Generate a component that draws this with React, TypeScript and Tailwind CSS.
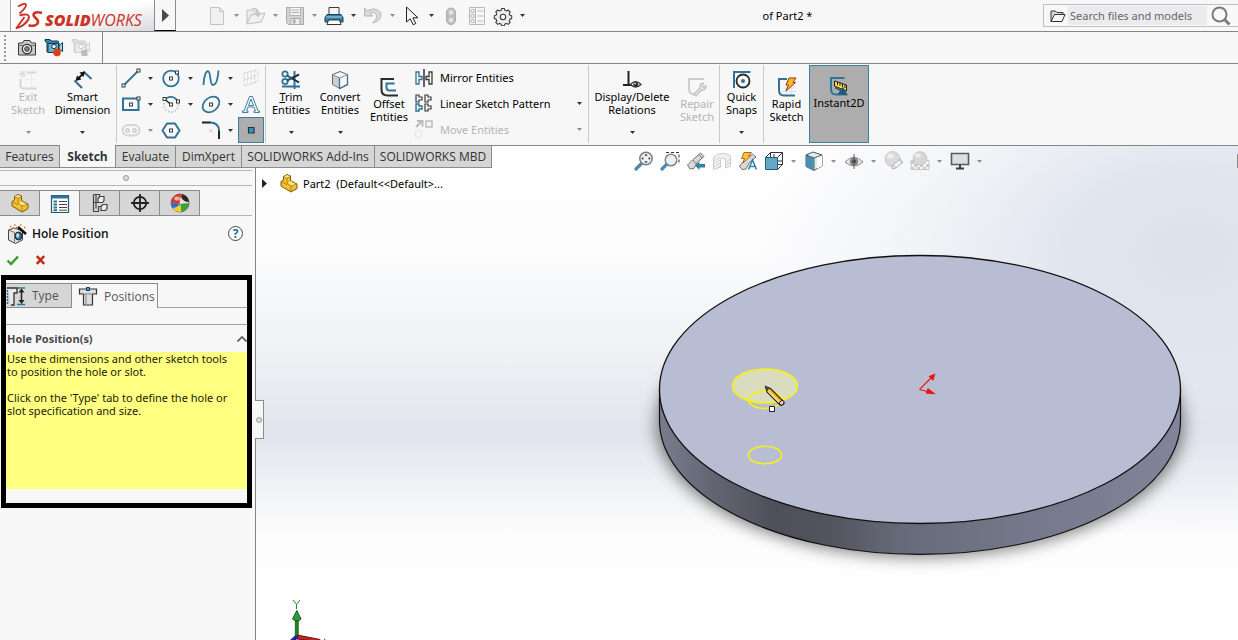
import type { ReactNode } from "react";

const INK = "#3a3a3a";
const BLUE = "#2f7396";

function Icon({ children }: { children: ReactNode }) {
  return (
    <svg viewBox="0 0 20 20" className="block h-5 w-5 shrink-0" fill="none" aria-hidden="true">
      {children}
    </svg>
  );
}

function Caret({ dim = false }: { dim?: boolean }) {
  return (
    <svg viewBox="0 0 5 3" className="block h-[3px] w-[5px] shrink-0" aria-hidden="true">
      <path d="M0 0h5L2.5 3z" fill={dim ? "#8e8e8e" : "#333"} />
    </svg>
  );
}

/* ---------- part glyphs shared by several places ---------- */

function Node({ x, y }: { x: number; y: number }) {
  return <rect x={x - 1.5} y={y - 1.5} width="3" height="3" fill="#fff" stroke={INK} />;
}

const PartIcon = (
  <Icon>
    <path d="M2 8.500 4.500 7V3.500L8 1.500 11.500 3v4.500L14 9l4 2v4.500L12 19 2 13z" fill="#f2c22e" stroke="#7a5710" strokeWidth="1" strokeLinejoin="round" />
    <path d="M4.500 3.500 8 5.200v5L12 13v5.500M8 5.200 11.500 3.200M12 13l5.800-2.200M2 8.600l2.500 1.200 3.500 2" stroke="#a87a16" strokeWidth=".9" />
    <path d="m5 3.500 3-1.500 3 1.300L8 4.800zM9 10l2.500-1.800 5 2.700-4.500 1.700z" fill="#fbe58c" />
  </Icon>
);

/* ---------- title bar ---------- */

const NewIcon = (
  <Icon>
    <path d="M3.500 1.500h9l4 4v13h-13z" fill="#f1f1f1" stroke="#c3c3c3" />
    <path d="M12.500 1.500v4h4" stroke="#c3c3c3" />
  </Icon>
);
const OpenIcon = (
  <Icon>
    <path d="M1 18V4h5l2 2h5v3" fill="#ececec" stroke="#c0c0c0" />
    <path d="m1 18 4-9 14-2-4 9z" fill="#f1f1f1" stroke="#bdbdbd" />
    <path d="M6 2c5-.5 7 1.500 7 5h2.500L12 11.500 8.500 7H11c0-2-1.500-3.500-5-3.500z" fill="#c4c4c4" />
  </Icon>
);
const SaveIcon = (
  <Icon>
    <path d="M1.500 1.500h17v17h-15l-2-2z" fill="#d2d2d2" stroke="#aaa" />
    <path d="M5 1.500h10.500v8H5z" fill="#f3f3f3" stroke="#b3b3b3" />
    <path d="M6.500 4h7.500M6.500 6.500h7.500" stroke="#b0b0b0" />
    <path d="M6 12.500h9v6H6z" fill="#eee" stroke="#a9a9a9" />
    <path d="M8 13.500h2.500v4H8z" fill="#a8a8a8" />
  </Icon>
);
const PrintIcon = (
  <Icon>
    <path d="M5 9V1.500h10V9" fill="#f4f4f4" stroke="#3c3c3c" />
    <path d="M3 8.500h14l2 3v4.500H1v-4.500z" fill="#2e7ea6" stroke="#17445c" />
    <path d="M2 11h16" stroke="#83bdd6" strokeWidth="1.500" />
    <path d="M4.500 14h11l1.500 4.500H3z" fill="#fff" stroke="#333" />
  </Icon>
);
const UndoIcon = (
  <Icon>
    <path d="M1.500 2v8H10L7 7.200c3-1.600 6-.5 6.500 2.800.3 3-1.500 5-4 7 5-1 8.500-4 8.500-8C18 3.500 10 1 4.500 5z" fill="#dadada" stroke="#b9b9b9" strokeLinejoin="round" />
  </Icon>
);
const PointerIcon = (
  <Icon>
    <path d="M4.500 1v15l3.700-3.200 3 6 2.600-1.300-2.900-5.700H16z" fill="#f5f5f5" stroke="#222" strokeLinejoin="round" />
  </Icon>
);
const LightIcon = (
  <Icon>
    <rect x="5.500" y="2" width="9" height="16.500" rx="4.500" fill="#bfbfbf" stroke="#aaa" />
    <circle cx="10" cy="6.500" r="2.300" fill="#e3e3e3" />
    <circle cx="10" cy="14" r="2.300" fill="#e3e3e3" />
  </Icon>
);
const OptionsListIcon = (
  <Icon>
    <path d="M2.500 1.500h15v17h-15zM8.500 1.500v17M10.500 5h6M10.500 10h6M10.500 15h6" stroke="#b9b9b9" />
    <path d="M4 3.500h3v3H4zM4 8.500h3v3H4zM4 13.500h3v3H4z" stroke="#b9b9b9" />
  </Icon>
);
const GearIcon = (
  <Icon>
    <path
      d="M8.600 2.500h2.800l.5 1.800 1.600.7 1.700-1 2 2-1 1.700.7 1.600 1.800.5v2.800l-1.800.5-.7 1.600 1 1.700-2 2-1.700-1-1.600.7-.5 1.700H8.600l-.5-1.700-1.600-.7-1.700 1-2-2 1-1.700-.7-1.600-1.800-.5V9.800l1.800-.5.7-1.600-1-1.700 2-2 1.700 1 1.600-.7z"
      fill="#ececec"
      stroke="#3d3d3d"
      strokeWidth="1.100"
      strokeLinejoin="round"
    />
    <circle cx="10" cy="11" r="2.700" fill="#fafafa" stroke="#3d3d3d" strokeWidth="1.100" />
  </Icon>
);

/* ---------- capture row ---------- */

const CameraIcon = (
  <Icon>
    <path d="M1.500 5h4L7 2.500h6L14.500 5h4v12h-17z" fill="#c9c9c9" stroke="#3a3a3a" strokeLinejoin="round" />
    <path d="M2 7.500h16" stroke="#777" />
    <circle cx="10" cy="11" r="4.700" fill="#ededed" stroke="#333" strokeWidth="1.200" />
    <circle cx="10" cy="11" r="2.300" fill="#888" stroke="#333" />
  </Icon>
);
const RecordIcon = (
  <Icon>
    <path d="M1 1.500h5l1 1.500h7l1 2v9H3V5L1 3z" fill="#2f87ae" stroke="#16394b" />
    <path d="M4 5.500h10.500v9H4z" fill="#62b2d2" stroke="#16394b" />
    <circle cx="10" cy="8.500" r="2.200" fill="#fff" stroke="#16394b" />
    <path d="m15 8 3.500-3.500v9L15 11z" fill="#a6d3e4" stroke="#16394b" />
    <circle cx="13" cy="14.500" r="3.800" fill="#e23d0c" />
  </Icon>
);
const StopRecordIcon = (
  <Icon>
    <path d="M1 1.500h5l1 1.500h7l1 2v9H3V5L1 3z" fill="#e0e0e0" stroke="#cfcfcf" />
    <path d="M4 5.500h10.500v9H4z" fill="#ececec" stroke="#cfcfcf" />
    <circle cx="10" cy="8.500" r="2.200" fill="#fff" stroke="#c9c9c9" />
    <path d="m15 8 3.500-3.500v9L15 11z" fill="#f1f1f1" stroke="#cfcfcf" />
    <path d="M10.500 12h6v6h-6z" fill="#bdbdbd" />
  </Icon>
);

/* ---------- ribbon ---------- */

const ExitSketchIcon = (
  <Icon>
    <path d="M9 2.500h9.500M2.500 9v6q0 3.500 3.500 3.500h12.500" stroke="#d6d6d6" strokeWidth="2" />
    <path d="M4.500 0v8M.5 4h8M1.500 1l6 6M7.500 1l-6 6" stroke="#d0d0d0" strokeWidth=".8" />
    <path d="M13.500 4v13M8 9.500h10" stroke="#ececec" />
  </Icon>
);
const SmartDimIcon = (
  <Icon>
    <path d="m1.500 10.500 7.500 7.500M10.500 1.500l8 7.500" stroke={BLUE} strokeWidth="2" />
    <path d="m4 9.500 7-6.500" stroke="#111" strokeWidth="1.800" />
    <path d="M2.500 11 4 5.500 8.500 9.500zM12 1.500 10.500 7 6.500 2.500z" fill="#111" />
  </Icon>
);
const TrimIcon = (
  <Icon>
    <path d="M13.500 1v18M1 16.500h18" stroke={BLUE} strokeWidth="2" />
    <circle cx="4" cy="4" r="2.700" stroke={BLUE} strokeWidth="1.800" />
    <circle cx="4" cy="11.500" r="2.700" stroke={BLUE} strokeWidth="1.800" />
    <path d="m6 5.500 12 7M6 10.500l12-6" stroke="#24546d" strokeWidth="2" />
    <path d="m11 8.500 7 4M11 8l7-3.500" stroke="#222" strokeWidth="1.200" />
  </Icon>
);
const ConvertIcon = (
  <Icon>
    <path d="m10 1.500 7.500 3v10L10 18.500l-7.500-4v-10z" fill="#f7f7f7" stroke="#666" strokeLinejoin="round" />
    <path d="m3 5 6.500 3v9.500L3 14z" fill="#cdcdcd" />
    <path d="M2.500 4.500 9.500 8l8-3.500" stroke="#888" />
    <path d="M9.500 8v10.500l8-4v-10" stroke={BLUE} strokeWidth="1.300" />
  </Icon>
);
const OffsetIcon = (
  <Icon>
    <path d="M15 2H2.500v10.500q0 6 6 6H19" stroke="#2b2b2b" strokeWidth="2" />
    <path d="M15.500 6.500H7.500v4q0 3 3 3H17" stroke={BLUE} strokeWidth="2" />
  </Icon>
);
const MirrorIcon = (
  <Icon>
    <path d="M10 1v18" stroke="#222" strokeWidth="1.400" />
    <path d="M2 4h3v4.500h3v3H5V16H2z" stroke={BLUE} strokeWidth="1.300" />
    <path d="M18 4h-3v4.500h-3v3h3V16h3z" stroke={INK} strokeWidth="1.300" />
  </Icon>
);
const PatternIcon = (
  <Icon>
    <path d="M2 2h3v2h3v3H5v2H2zM11 2h3v2h3v3h-3v2h-3zM11 11h3v2h3v3h-3v2h-3z" stroke={INK} strokeWidth="1.200" />
    <path d="M2 11h3v2h3v3H5v2H2z" stroke={BLUE} strokeWidth="1.400" />
  </Icon>
);
const MoveIcon = (
  <Icon>
    <path d="m2 8 5-5M3 2h5.500v5.500" stroke="#b9b9b9" strokeWidth="2" />
    <path d="M12 2h6v6h-6z" stroke="#bdbdbd" strokeWidth="1.500" />
    <path d="M1.500 12h6v6h-6z" stroke="#dadada" strokeDasharray="2 1" />
  </Icon>
);
const RelationsIcon = (
  <Icon>
    <path d="M6.500 1v14M1 15h9" stroke="#222" strokeWidth="2" />
    <path d="M8.500 14.500q5-6 10.500 0-5.500 5-10.500 0z" fill="#fff" stroke="#333" strokeWidth="1.200" />
    <circle cx="13.800" cy="14.300" r="2.500" fill="#333" />
    <circle cx="13" cy="13.500" r=".8" fill="#fff" />
  </Icon>
);
const RepairIcon = (
  <Icon>
    <path d="M17 2H2v9.500q0 6 6 6" stroke="#cdcdcd" strokeWidth="2" />
    <path d="m7 17 6-6c-1-3 1-5 3.500-5l-1.500 3 2 1.500 2-2c.5 3-2 5-4.500 4.500l-5.500 6z" fill="#e8e8e8" stroke="#bfbfbf" strokeWidth="1.200" />
  </Icon>
);
const SnapsIcon = (
  <Icon>
    <path d="M2 18V2H18.500" stroke={BLUE} strokeWidth="2" />
    <circle cx="11" cy="11" r="6.500" stroke="#2a2a2a" strokeWidth="1.800" />
    <circle cx="11" cy="11" r="2" fill={BLUE} />
  </Icon>
);
const RapidIcon = (
  <Icon>
    <path d="M14 6v13M9 11h10M9 6v13M5 14.500h14" stroke="#dedede" />
    <path d="M10 2H2v11q0 5.500 5 5.500h11" stroke={BLUE} strokeWidth="2" />
    <path d="M12 1h7l-3 4.500h2.500L9 14l2.500-6H9z" fill="#ffb52e" stroke="#8f3f0e" strokeLinejoin="round" />
  </Icon>
);
const Instant2DIcon = (
  <Icon>
    <path d="M15.500 2H2v11q0 5.500 5 5.500h11.500" stroke={BLUE} strokeWidth="2" />
    <path d="M5.500 5 17.500 9v6L5.500 10z" fill="#f7dc43" stroke="#222" />
    <path d="M8.500 6v3M11 7v3M13.500 8v3M16 9v3" stroke="#222" />
    <path d="m6 11.500 8 4M10 17.500l7 .5-3-6z" fill="#1e5a7a" stroke="#1e5a7a" strokeWidth="1.400" />
  </Icon>
);

const LineIcon = (
  <Icon>
    <path d="M2.500 17.500 17.500 2.500" stroke={BLUE} strokeWidth="1.800" />
    <Node x={2.500} y={17.500} />
    <Node x={17.500} y={2.500} />
  </Icon>
);
const CircleIcon = (
  <Icon>
    <circle cx="10" cy="10.500" r="7.800" stroke={BLUE} strokeWidth="1.800" />
    <Node x={10} y={10.500} />
    <Node x={16} y={4.500} />
  </Icon>
);
const SplineIcon = (
  <Icon>
    <path d="M2.500 17C3 8 5 2 7.500 3.500S8.500 17 12 17s5-8 5.500-14.500" stroke={BLUE} strokeWidth="1.800" />
  </Icon>
);
const PlaneIcon = (
  <Icon>
    <path d="m3 5 14-3.500v12L3 18.500zM3 11.500l14-4M10 3v13M6.500 4v13M13.500 2.500v13" stroke="#cfcfcf" strokeDasharray="2 1.500" />
  </Icon>
);
const RectIcon = (
  <Icon>
    <path d="M2 4.500h15.500v11.500H2z" stroke={BLUE} strokeWidth="2" />
    <Node x={10} y={10.500} />
    <Node x={17.500} y={4.500} />
  </Icon>
);
const ArcIcon = (
  <Icon>
    <path d="M3.500 6.500c3.500-5 10-5 13.500 1" stroke={BLUE} strokeWidth="1.800" />
    <path d="M3 9c-1 12 15 12 14.500 0" stroke="#c2c2c2" strokeWidth="1.800" strokeDasharray="1.500 1.800" />
    <path d="m4 5.500 6 5" stroke="#222" strokeWidth="1.500" />
    <Node x={3.500} y={5} />
    <Node x={10} y={10.500} />
    <Node x={17} y={7.500} />
  </Icon>
);
const EllipseIcon = (
  <Icon>
    <ellipse cx="10" cy="10.500" rx="9.200" ry="6.800" transform="rotate(-38 10 10.500)" stroke={BLUE} strokeWidth="1.800" />
    <Node x={10} y={10.500} />
  </Icon>
);
const TextIcon = (
  <Icon>
    <path d="M1.500 18.500h5.500v-1.500H5.500L7 13h6l1.500 4H13v1.500h5.500V17H17L11.500 2.500h-3L3 17H1.500zM7.500 11.500h5L10 5z" fill="#f4f9fb" stroke={BLUE} strokeWidth=".9" />
  </Icon>
);
const SlotIcon = (
  <Icon>
    <rect x="1.500" y="5" width="17" height="10.500" rx="5.200" stroke="#d4d4d4" strokeWidth="1.800" />
    <path d="M5 9h3v3H5zM12 9h3v3h-3z" stroke="#bdbdbd" />
  </Icon>
);
const PolygonIcon = (
  <Icon>
    <path d="m6 3.500-4.500 7L6 17.500h8l4.500-7L14 3.500z" stroke={BLUE} strokeWidth="2" strokeLinejoin="round" />
    <Node x={10} y={10.500} />
  </Icon>
);
const FilletIcon = (
  <Icon>
    <path d="M1 2.500h9M18 10v9" stroke="#222" strokeWidth="2" />
    <path d="M9 2.500q9 0 9 8.500" stroke={BLUE} strokeWidth="2" />
    <path d="m8 9 3.500 3.500M11.500 9 8 12.500" stroke="#d4bfbf" />
  </Icon>
);
const PointIcon = (
  <Icon>
    <path d="M7.500 7.500h5.500v5.500H7.500z" fill="#3e93b5" stroke="#17384a" strokeWidth="1.200" />
  </Icon>
);

/* ---------- heads-up toolbar ---------- */

const ZoomFitIcon = (
  <Icon>
    <path d="m2 18 6-6" stroke="#4b8aa8" strokeWidth="3.200" strokeLinecap="round" />
    <circle cx="12" cy="7.500" r="6.200" fill="#eef0f2" stroke="#7d8186" strokeWidth="1.500" />
    <path d="m12 2.800 1.600 2h-3.200zM12 12.200l1.600-2h-3.200zM7.300 7.500l2-1.600v3.200zM16.700 7.500l-2-1.600v3.200z" fill="#333" />
  </Icon>
);
const ZoomAreaIcon = (
  <Icon>
    <path d="M6 1.500h13V13" stroke="#333" strokeDasharray="3 2" />
    <path d="m2 18 5-5" stroke="#4b8aa8" strokeWidth="3.200" strokeLinecap="round" />
    <circle cx="11" cy="9" r="5.800" fill="#e4f1f6" stroke="#84888c" strokeWidth="1.500" />
  </Icon>
);
const PrevViewIcon = (
  <Icon>
    <path d="m1.500 14 5-5 8-7 3.500 3.500-7 6-3 6-4 .5z" fill="#d8d8d8" stroke="#757575" />
    <path d="m7 9 3.500 4M13 3.500l3 3.500" stroke="#777" />
    <path d="m9 14.500 4.500-4v2.500H19v3.500h-5.500V19z" fill="#347fa3" />
  </Icon>
);
const SectionIcon = (
  <Icon>
    <path d="M1.500 6.500 6 3q7-2 12.500 1.500V15l-5 2V8q-3-2-5 0v8l-7 2.500z" fill="#f1f1f1" stroke="#cdcdcd" />
    <path d="m2 10 6-4M2 13l6-4M2 16l6-4M4 18l4-3M13.500 11l5-3M13.500 14l5-3" stroke="#d4d4d4" />
  </Icon>
);
const AnnotationIcon = (
  <Icon>
    <path d="m1.500 15 5-6 8-6 3.500 3-7 6-3 6-4 .5z" fill="#d8d8d8" stroke="#757575" />
    <path d="M6 1.500h7.500l-3 3.500h2L5 12l1.500-4.500H3.500z" fill="#ffc338" stroke="#b5651c" />
    <path d="M10.500 18.500 14.500 9l4 9.500M12 15.500h5" stroke="#347fa3" strokeWidth="1.500" />
  </Icon>
);
const OrientationIcon = (
  <Icon>
    <path d="m1.500 6.500 5-5h12v12l-5 5" stroke="#333" />
    <path d="M6.500 1.500v5M13.500 6.500l5-5M13.500 13.500h5M10 3v4M14 10h4" stroke="#333" />
    <path d="M1.500 6.500h12v12h-12z" fill="#60a8c6" stroke="#275f7a" />
  </Icon>
);
const DisplayStyleIcon = (
  <Icon>
    <path d="m9 1 9 3v11l-8 4.500-8-4V4z" fill="#d8edf5" stroke="#4c5960" strokeLinejoin="round" />
    <path d="m2 4 7.500 3v12L2 15.500z" fill="#4591b3" />
    <path d="m13 5.500 5-1.500v11l-5 2.800z" fill="#fff" />
    <path d="M2 4l8 3 8-3M10 7v12" stroke="#4c5960" />
  </Icon>
);
const HideShowIcon = (
  <Icon>
    <path d="M1 11q9-9.500 18 0-9 8-18 0z" fill="#e8e8e8" stroke="#8a8a8a" />
    <circle cx="10" cy="10.500" r="4.300" fill="#888" />
    <circle cx="10" cy="10.500" r="2" fill="#444" />
    <path d="M10 3v15" stroke="#5a5a5a" />
  </Icon>
);
const AppearanceIcon = (
  <Icon>
    <circle cx="8.500" cy="8" r="7.500" fill="#dadada" stroke="#c8c8c8" />
    <ellipse cx="6.500" cy="5" rx="3.500" ry="2.500" fill="#ededed" />
    <path d="m8 18 1-4 7-6 3 3-7 6z" fill="#f2f2f2" stroke="#b5b5b5" />
    <path d="m9 14 3 3M15 9l3 3" stroke="#b5b5b5" />
  </Icon>
);
const SceneIcon = (
  <Icon>
    <path d="M1 9.500h18v9H1z" fill="#f6f6f6" stroke="#c6c6c6" />
    <path d="M1 10h3v3H1zM4 13h3v3H4zM7 16h3v3H7zM10 13h3v3h-3zM13 16h3v3h-3zM16 13h3v3h-3zM1 16h3v3H1z" fill="#c9c9c9" />
    <circle cx="10" cy="7.500" r="6.800" fill="#d6d6d6" stroke="#c2c2c2" />
    <ellipse cx="8" cy="4.500" rx="3" ry="2" fill="#ececec" />
  </Icon>
);
const MonitorIcon = (
  <Icon>
    <path d="M1.500 2.500h17v11h-17z" fill="#dcdfe1" stroke="#5a5a5a" strokeWidth="1.600" />
    <path d="M10 14v3M6 17.500h8" stroke="#3d3d3d" strokeWidth="2" />
  </Icon>
);

/* ---------- property panel ---------- */

const PropertyIcon = (
  <Icon>
    <path d="M1.500 1.500h17v17h-17z" fill="#fff" stroke="#24576f" strokeWidth="1.200" />
    <path d="M1.500 3h17" stroke={BLUE} strokeWidth="3" />
    <path d="M3.500 7.500H7M3.500 10.500H7M3.500 13.500H7M3.500 16.200H7" stroke={BLUE} strokeWidth="2" />
    <path d="M9 7.500h8M9 10.500h8M9 13.500h8M9 16.200h8" stroke="#444" />
  </Icon>
);
const ConfigIcon = (
  <Icon>
    <path d="M3.500 1.500h6v4M3.500 1.500v17h5v-5h4M6 1.500v14M3.500 9.500h6" stroke="#444" strokeWidth="1.200" />
    <path d="M8 5.500 10 3.500h4v4l-1.500 2H8zM11 13.500l2-2h4v4l-1.500 2H11z" fill="#eee" stroke="#444" strokeWidth="1.200" />
  </Icon>
);
const DimXpertIcon = (
  <Icon>
    <circle cx="10" cy="10" r="6.200" stroke="#222" strokeWidth="1.800" />
    <path d="M10 1v18M1 10h18" stroke="#222" strokeWidth="1.800" />
  </Icon>
);
const DisplayManagerIcon = (
  <Icon>
    <circle cx="10" cy="10" r="9" fill="#e9e4d8" stroke="#666" />
    <path d="M10 11Q5 9 1.200 10A9 9 0 0 1 12 1.300Q9 5 10 11z" fill="#d8352a" />
    <path d="M12 1.300A9 9 0 0 1 19 9q-6 0-8-5z" fill="#2c2725" />
    <path d="M10 11q5-1 9-.5A9 9 0 0 1 11 19q0-4-1-8z" fill="#3ca03c" />
    <path d="M10 11q1 4 1 8a9 9 0 0 1-8-3q4-1 7-5z" fill="#f6cd20" />
    <path d="M10 11q-3 4-7.500 4A9 9 0 0 1 1.200 10q4-1 8.800 1z" fill="#2e6ec4" />
    <ellipse cx="7" cy="5.500" rx="2.800" ry="2" fill="#fff" opacity=".6" />
  </Icon>
);
const HoleWizardIcon = (
  <Icon>
    <path d="m1.500 6 6-2 8 3v9l-7 3.500-7-3.500z" fill="#e2e2e2" stroke="#444" />
    <path d="m1.500 6 6 2.500v10" stroke="#777" />
    <ellipse cx="11.500" cy="12" rx="3.400" ry="4" fill="#2f6f92" stroke="#222" />
    <ellipse cx="10.700" cy="11.500" rx="1.600" ry="2.200" fill="#b5dcec" />
    <path d="m11 3 8 7" stroke="#111" strokeWidth="2.400" />
    <path d="M3 2.500h1.500M7 1h1.500M13 1h1.500M9 3.500h1.500M17 3.500h1.500M5.500 4H7" stroke="#d9731e" strokeWidth="1.500" />
  </Icon>
);
const TypeIcon = (
  <Icon>
    <path d="M1.500 1v18" stroke={BLUE} strokeWidth="1.500" strokeDasharray="2 1" />
    <path d="M2 2h9v5H8v12H5" fill="#e9e9e9" stroke="#333" strokeWidth="1.300" />
    <path d="M11 2h8M11 18.500h8" stroke={BLUE} strokeWidth="1.500" />
    <path d="M15.500 4v12" stroke="#222" strokeWidth="1.500" />
    <path d="m15.500 2.500 3 4h-6zM15.500 18l3-4h-6z" fill="#222" />
  </Icon>
);
const PositionsIcon = (
  <Icon>
    <path d="M1.500 3h17v5h-4v11h-9V8h-4z" fill="#ddd" stroke="#333" strokeWidth="1.200" />
    <path d="M8 8v10.500M5.500 8h9" stroke="#888" />
    <path d="M8.500 1.500h3v3h-3z" fill="#4aa0c4" stroke="#17384a" />
  </Icon>
);

/* ---------- building blocks ---------- */

function TitleTool({ icon, label, caret, dim }: { icon: ReactNode; label: string; caret?: boolean; dim?: boolean }) {
  return (
    <button type="button" aria-label={label} className="flex items-center">
      {icon}
      {caret && (
        <span className="flex w-[19px] justify-center">
          <Caret dim={dim} />
        </span>
      )}
    </button>
  );
}

type RibbonProps = {
  icon: ReactNode;
  lines: ReactNode[];
  width: string;
  caret?: boolean;
  disabled?: boolean;
  active?: boolean;
};

function RibbonButton({ icon, lines, width, caret, disabled, active }: RibbonProps) {
  return (
    <button
      type="button"
      disabled={disabled}
      className={`flex shrink-0 flex-col items-center self-stretch whitespace-nowrap leading-[13px] ${width} ${
        caret ? "pt-[5px]" : active ? "pt-2.5" : "pt-3"
      } ${disabled ? "text-[#b4b4b4]" : "text-black"} ${active ? "border border-[#3f7c9b] bg-[#adadad]" : ""}`}
    >
      {icon}
      {lines.map((line, index) => (
        <span key={index}>{line}</span>
      ))}
      {caret && (
        <span className="mt-auto pb-[9px]">
          <Caret dim={disabled} />
        </span>
      )}
    </button>
  );
}

function Separator() {
  return <div className="w-px shrink-0 self-stretch bg-[#c9c9c9]" />;
}

type ToolCell = { icon: ReactNode; label: string; caret?: boolean; dim?: boolean; active?: boolean };

const sketchTools: ToolCell[] = [
  { icon: LineIcon, label: "Line", caret: true },
  { icon: CircleIcon, label: "Circle", caret: true },
  { icon: SplineIcon, label: "Spline", caret: true },
  { icon: PlaneIcon, label: "Plane" },
  { icon: RectIcon, label: "Rectangle", caret: true },
  { icon: ArcIcon, label: "Arc", caret: true },
  { icon: EllipseIcon, label: "Ellipse", caret: true },
  { icon: TextIcon, label: "Text" },
  { icon: SlotIcon, label: "Slot", caret: true, dim: true },
  { icon: PolygonIcon, label: "Polygon" },
  { icon: FilletIcon, label: "Fillet", caret: true },
  { icon: PointIcon, label: "Point", active: true },
];

const ribbonTabs = [
  { label: "Features", width: "w-[60px]" },
  { label: "Sketch", width: "w-[56px]" },
  { label: "Evaluate", width: "w-[60px]" },
  { label: "DimXpert", width: "w-[66px]" },
  { label: "SOLIDWORKS Add-Ins", width: "w-[133px]" },
  { label: "SOLIDWORKS MBD", width: "w-[117px]" },
];

const hudTools: ToolCell[] = [
  { icon: ZoomFitIcon, label: "Zoom to fit" },
  { icon: ZoomAreaIcon, label: "Zoom to area" },
  { icon: PrevViewIcon, label: "Previous view" },
  { icon: SectionIcon, label: "Section view" },
  { icon: AnnotationIcon, label: "Dynamic annotation views" },
  { icon: OrientationIcon, label: "View orientation", caret: true },
  { icon: DisplayStyleIcon, label: "Display style", caret: true },
  { icon: HideShowIcon, label: "Hide or show items", caret: true },
  { icon: AppearanceIcon, label: "Edit appearance" },
  { icon: SceneIcon, label: "Apply scene", caret: true },
  { icon: MonitorIcon, label: "View settings", caret: true },
];

const panelTabs = [
  { icon: PartIcon, label: "Feature tree" },
  { icon: PropertyIcon, label: "Properties" },
  { icon: ConfigIcon, label: "Configurations" },
  { icon: DimXpertIcon, label: "DimXpert manager" },
  { icon: DisplayManagerIcon, label: "Display manager" },
];

function Logo() {
  return (
    <div className="flex h-full w-36 items-center border-l border-[#a8a8a8] bg-linear-to-br from-white from-50% to-[#d9dade] pl-1">
      <svg viewBox="0 0 28 28" className="h-7 w-7 shrink-0" fill="none" strokeLinejoin="round" aria-hidden="true">
        <path d="M3 4.500C6 2.500 10.500.5 11 2.800c.3 2.200-3.500 6-6.500 8.700" stroke="#cf3327" strokeWidth="1.800" />
        <path d="M4.500 13.500C10 11.500 15.500 12 13.500 17 11.500 21.500 6 25 1.500 26L9.500 15" stroke="#cf3327" strokeWidth="2" />
        <path d="M27 11c-5-1.500-8.500-.5-8.500 2s5.500 4 4.500 7.500c-1 3-5 4-9.500 2.800" stroke="#cf3327" strokeWidth="2.600" />
      </svg>
      <span className="pt-2 pl-0.5 font-['Open_Sans',sans-serif] text-[16px] leading-5 text-[#cb3328] italic">
        <b className="font-extrabold">SOLID</b>WORKS
      </span>
    </div>
  );
}

function TitleBar() {
  return (
    <header className="flex h-8 shrink-0 items-center border-b border-[#858585] bg-[#f7f7f7]">
      <div className="flex h-full pl-2.5">
        <Logo />
        <button type="button" aria-label="Expand menu" className="flex w-[22px] items-center justify-center border-x border-b border-x-[#8b8b8b] border-b-black bg-[#f7f7f7]">
          <svg viewBox="0 0 7 13" className="h-[13px] w-[7px]" aria-hidden="true">
            <path d="M0 0v13l7-6.500z" fill="#4a4a4a" />
          </svg>
        </button>
      </div>
      <div className="flex items-center pl-[31px]">
        <TitleTool icon={NewIcon} label="New" caret dim />
        <TitleTool icon={OpenIcon} label="Open" caret dim />
        <TitleTool icon={SaveIcon} label="Save" caret dim />
        <TitleTool icon={PrintIcon} label="Print" caret />
        <TitleTool icon={UndoIcon} label="Undo" caret dim />
        <TitleTool icon={PointerIcon} label="Select" caret />
        <div className="flex items-center gap-[6px]">
          <TitleTool icon={LightIcon} label="Rebuild" />
          <TitleTool icon={OptionsListIcon} label="File properties" />
          <TitleTool icon={GearIcon} label="Options" caret />
        </div>
      </div>
      <h1 className="flex-1 text-center">of Part2 *</h1>
      <form className="flex h-[23px] w-[195px] items-center border border-r-0 border-[#bfbfbf] bg-[#f8f8f8] pl-1.5">
        <svg viewBox="0 0 16 14" className="h-3.5 w-4 shrink-0" fill="none" aria-hidden="true">
          <path d="M1 12.500V2h4.500L7 3.500h6V6" fill="#d8d8d8" stroke="#333" />
          <path d="m1 12.500 3.500-7H15l-3 7z" fill="#f5f5f5" stroke="#333" />
        </svg>
        <input
          type="text"
          aria-label="Search files and models"
          placeholder="Search files and models"
          className="ml-0.5 h-[19px] w-[139px] shrink-0 bg-[#ebebef] pl-[2px] text-[#666] outline-none placeholder:text-[#666]"
        />
        <button type="button" aria-label="Search" className="ml-1 flex shrink-0 items-center gap-[5px]">
          <svg viewBox="0 0 20 20" className="h-5 w-5" fill="none" aria-hidden="true">
            <circle cx="8.500" cy="8.500" r="7" stroke="#7b7b7b" strokeWidth="2" />
            <path d="m13.500 13.500 5 5" stroke="#7b7b7b" strokeWidth="3" />
          </svg>
        </button>
      </form>
    </header>
  );
}

function CaptureBar() {
  return (
    <div className="flex h-8 shrink-0 items-center border-b border-[#858585] bg-[#f7f7f7]">
      <div className="flex h-full w-[103px] items-center gap-[7px] border-r border-[#858585] pl-1">
        <div className="h-[26px] border-l-2 border-dotted border-[#999]" />
        <div className="flex gap-[7px] pl-1">
          <button type="button" aria-label="Capture image">{CameraIcon}</button>
          <button type="button" aria-label="Record video">{RecordIcon}</button>
          <button type="button" aria-label="Stop recording" disabled>{StopRecordIcon}</button>
        </div>
      </div>
    </div>
  );
}

function Ribbon() {
  return (
    <div className="flex h-[82px] shrink-0 items-stretch border-b border-[#858585] bg-[#f7f7f7] pt-px pb-0.5">
      <RibbonButton icon={ExitSketchIcon} lines={["Exit", "Sketch"]} width="w-14" caret disabled />
      <RibbonButton icon={SmartDimIcon} lines={["Smart", "Dimension"]} width="w-[53px]" caret />
      <div className="w-[7px]" />
      <Separator />
      <div className="grid grid-cols-[40px_40px_40px_27px] pl-px">
        {sketchTools.map((tool) => (
          <button key={tool.label} type="button" aria-label={tool.label} className="flex items-center">
            <span className={`flex h-[26px] w-[26px] items-center justify-center ${tool.active ? "border border-[#3f7c9b] bg-[#adadad]" : ""}`}>
              {tool.icon}
            </span>
            {tool.caret && (
              <span className="pl-1">
                <Caret dim={tool.dim} />
              </span>
            )}
          </button>
        ))}
      </div>
      <Separator />
      <RibbonButton icon={TrimIcon} lines={[<><u>T</u>rim</>, "Entities"]} width="w-[50px]" caret />
      <RibbonButton icon={ConvertIcon} lines={["Convert", "Entities"]} width="w-12" caret />
      <RibbonButton icon={OffsetIcon} lines={["Offset", "Entities"]} width="w-[50px]" />
      <div className="flex w-[174px] flex-col pr-1.5">
        <button type="button" className="flex h-[25px] items-center gap-1.5">
          {MirrorIcon}
          <span>Mirror Entities</span>
        </button>
        <button type="button" className="flex h-[26px] items-center gap-1.5">
          {PatternIcon}
          <span>Linear Sketch Pattern</span>
          <span className="ml-auto"><Caret /></span>
        </button>
        <button type="button" disabled className="flex h-[26px] items-center gap-1.5 text-[#b4b4b4]">
          {MoveIcon}
          <span>Move Entities</span>
          <span className="ml-auto"><Caret dim /></span>
        </button>
      </div>
      <Separator />
      <RibbonButton icon={RelationsIcon} lines={["Display/Delete", "Relations"]} width="w-[86px]" caret />
      <RibbonButton icon={RepairIcon} lines={["Repair", "Sketch"]} width="w-11" disabled />
      <Separator />
      <RibbonButton icon={SnapsIcon} lines={["Quick", "Snaps"]} width="w-[43px]" caret />
      <Separator />
      <RibbonButton icon={RapidIcon} lines={["Rapid", "Sketch"]} width="w-[45px]" />
      <RibbonButton icon={Instant2DIcon} lines={["Instant2D"]} width="w-[60px]" active />
    </div>
  );
}

function Scene() {
  return (
    <svg
      viewBox="0 146 1238 494"
      preserveAspectRatio="xMinYMin slice"
      className="absolute inset-0 h-full w-full"
      role="img"
      aria-label="Disc model with hole preview"
    >
      <defs>
        <linearGradient id="band" x1="0" y1="146" x2="0" y2="640" gradientUnits="userSpaceOnUse">
          <stop offset="0" stopColor="#fff" />
          <stop offset=".22" stopColor="#fcfcfd" />
          <stop offset=".42" stopColor="#eff1f5" />
          <stop offset=".58" stopColor="#e1e4ec" />
          <stop offset=".7" stopColor="#f2f3f7" />
          <stop offset=".79" stopColor="#fdfdfd" />
          <stop offset="1" stopColor="#fff" />
        </linearGradient>
        <radialGradient id="corner" cx="0" cy="0" r="1" gradientUnits="userSpaceOnUse" gradientTransform="translate(1190 250) scale(430 290)">
          <stop offset="0" stopColor="#dce1ec" />
          <stop offset=".3" stopColor="#dde2ec" stopOpacity=".85" />
          <stop offset=".65" stopColor="#e0e4ed" stopOpacity=".35" />
          <stop offset="1" stopColor="#e2e5ed" stopOpacity="0" />
        </radialGradient>
        <linearGradient id="rim" x1="660" y1="0" x2="1180" y2="0" gradientUnits="userSpaceOnUse">
          <stop offset="0" stopColor="#787c8e" />
          <stop offset=".1" stopColor="#636672" />
          <stop offset=".22" stopColor="#4e4f5a" />
          <stop offset=".32" stopColor="#51535d" />
          <stop offset=".46" stopColor="#666a78" />
          <stop offset=".7" stopColor="#75788a" />
          <stop offset="1" stopColor="#828599" />
        </linearGradient>
        <filter id="soft" x="-10%" y="-20%" width="120%" height="140%">
          <feGaussianBlur stdDeviation="8" />
        </filter>
      </defs>
      <rect y="146" width="1238" height="494" fill="url(#band)" />
      <rect x="700" y="146" width="538" height="494" fill="url(#corner)" />
      <ellipse cx="920" cy="424" rx="264" ry="133" fill="#555" opacity=".75" filter="url(#soft)" />
      <path d="M659.500 389.500v31a260.500 134 0 0 0 521 0v-31z" fill="url(#rim)" stroke="#111" strokeWidth="1.200" />
      <ellipse cx="920" cy="389.500" rx="260.500" ry="134" fill="#b9bdd4" stroke="#111" strokeWidth="1.300" />
      <ellipse cx="765" cy="386" rx="32.500" ry="16.800" fill="#dadcc0" stroke="#f5f01c" strokeWidth="1.700" />
      <ellipse cx="765" cy="399.700" rx="16.600" ry="8.800" stroke="#f5f01c" strokeWidth="1.600" fill="none" />
      <ellipse cx="765" cy="455" rx="16.600" ry="8.800" stroke="#f5f01c" strokeWidth="1.600" fill="none" />
      <g stroke="#ee1111" strokeWidth="1.100" fill="#ee1111">
        <path d="m919.500 389.500 13-13M919.500 389.500l8 2" fill="none" />
        <path d="m934.500 374.500-5 2 3.500 3.500zM934 393.500l-6-4.500-1.500 4z" />
      </g>
      <path d="m765.500 386.500 1.500 5.500 13 13q2.500 1 4-1.500l-.5-2-13-13z" fill="#f5b82e" stroke="#222" strokeWidth="1.200" />
      <path d="m768 391 12.500 12.500" stroke="#ffe58a" strokeWidth="1.500" />
      <path d="m765.500 386.500 1.500 4.500 3-3z" fill="#444" />
      <path d="m779 403 3-3 2 1.500-.5 3-2.500.8z" fill="#f0c5bd" stroke="#222" />
      <path d="M769.500 406.500h5v5h-5z" fill="#fff" stroke="#222" />
      <path d="m293 600 3.500 4.500V609m0-4.500L300 600" stroke="#1d8a2c" fill="none" />
      <path d="M294.800 620h4v16h-4z" fill="#237a2a" />
      <path d="m296.800 610.500 4.200 8.500q-4 4-8.500 0z" fill="#2f9a3a" stroke="#14561c" />
      <path d="m297 635 23 4.500v2L297 639z" fill="#c42525" stroke="#6b1010" />
      <path d="m289 641 6-5.500 4 1.500-4 4z" fill="#20209c" />
      <path d="m324 639 5 4" stroke="#c42525" />
    </svg>
  );
}

function PropertyPanel() {
  return (
    <aside className="relative flex w-64 shrink-0 flex-col border-r border-[#858585] bg-[#f7f7f7]">
      <div className="mt-0.5 mr-[3px] flex h-4 items-center justify-center border-y border-[#b5b5b5]">
        <span className="h-1.5 w-1.5 rounded-full border border-[#999] bg-[#ddd]" />
      </div>
      <div className="mt-1 mr-[3px] flex h-[26px]" role="tablist">
        {panelTabs.map((tab) => (
          <button
            key={tab.label}
            type="button"
            role="tab"
            aria-label={tab.label}
            aria-selected={tab.label === "Properties"}
            className={`flex w-10 items-center justify-center border-t border-r border-[#8b8b8b] ${
              tab.label === "Properties" ? "" : "border-b bg-[#d6d6d6]"
            }`}
          >
            {tab.icon}
          </button>
        ))}
        <div className="flex-1 border-b border-[#b5b5b5]" />
      </div>
      <div className="flex h-[35px] items-center gap-[5px] pr-3 pl-[7px]">
        {HoleWizardIcon}
        <h2 className="font-['Open_Sans',sans-serif] text-[12px] font-semibold text-[#111]">Hole Position</h2>
        <button
          type="button"
          aria-label="Help"
          className="ml-auto flex h-[15px] w-[15px] items-center justify-center rounded-full border border-[#444] bg-white text-[12px] leading-none font-bold text-[#2b6c8f]"
        >
          ?
        </button>
      </div>
      <div className="flex h-6 items-start gap-[17px] pt-0.5 pl-1.5">
        <button type="button" aria-label="OK">
          <svg viewBox="0 0 13 14" className="h-3.5 w-[13px]" fill="none" aria-hidden="true">
            <path d="m1.500 7.500 3.500 3.500 7-7.500" stroke="#3a9b26" strokeWidth="2.400" />
          </svg>
        </button>
        <button type="button" aria-label="Cancel">
          <svg viewBox="0 0 9 14" className="h-3.5 w-[9px]" fill="none" aria-hidden="true">
            <path d="m.8 3 7.400 8M8.200 3 .8 11" stroke="#c12a14" strokeWidth="2.400" />
          </svg>
        </button>
      </div>
      <section className="mr-[3px] ml-px border-[5px] border-black">
        <div className="mt-[3px] flex h-[25px] font-['Open_Sans',sans-serif] text-[12px] text-[#555]" role="tablist">
          <button type="button" role="tab" aria-selected="false" className="flex w-[66px] items-center gap-1.5 border border-l-0 border-[#8b8b8b] bg-[#d6d6d6]">
            {TypeIcon}
            <span>Type</span>
          </button>
          <button type="button" role="tab" aria-selected="true" className="flex w-[86px] items-center gap-1.5 border-t border-r border-[#8b8b8b] pl-1.5">
            {PositionsIcon}
            <span>Positions</span>
          </button>
          <div className="flex-1 border-b border-[#a5a5a5]" />
        </div>
        <div className="mt-4 flex h-7 items-center justify-between border-t border-[#a5a5a5] pl-px">
          <h3 className="font-['Open_Sans',sans-serif] font-bold text-[#484848]">Hole Position(s)</h3>
          <button type="button" aria-label="Collapse">
            <svg viewBox="0 0 10 6" className="h-1.5 w-2.5" fill="none" aria-hidden="true">
              <path d="m.5 5.500 4.500-4.500 4.500 4.500" stroke="#555" strokeWidth="1.600" />
            </svg>
          </button>
        </div>
        <div className="mb-3.5 h-[137px] bg-[#ffff80] pr-2 pl-px leading-[13px] text-[#1c1c10]">
          <p>
            Use the dimensions and other sketch tools
            <br />
            to position the hole or slot.
          </p>
          <p className="pt-[13px]">
            Click on the 'Type' tab to define the hole or
            <br />
            slot specification and size.
          </p>
        </div>
      </section>
      <button
        type="button"
        aria-label="Collapse panel"
        className="absolute top-[232px] -right-[9px] flex h-[39px] w-[9px] items-center justify-center border border-l-0 border-[#8b8b8b] bg-[#f7f7f7]"
      >
        <span className="h-1.5 w-1.5 shrink-0 rounded-full border border-[#999] bg-[#ddd]" />
      </button>
    </aside>
  );
}

export default function App() {
  return (
    <div className="flex h-screen flex-col overflow-hidden bg-[#f7f7f7] font-['Noto_Sans',sans-serif] text-[11px] leading-[13px] text-black">
      <TitleBar />
      <CaptureBar />
      <Ribbon />
      <main className="relative flex min-h-0 flex-1 flex-col">
        <Scene />
        <div className="relative flex h-[22px] shrink-0 font-['Open_Sans',sans-serif] text-[12px] text-[#333]" role="tablist">
          {ribbonTabs.map((tab) => (
            <button
              key={tab.label}
              type="button"
              role="tab"
              aria-selected={tab.label === "Sketch"}
              className={`shrink-0 border-r border-b border-[#8b8b8b] whitespace-nowrap ${tab.width} ${
                tab.label === "Sketch" ? "-mt-px bg-[#f7f7f7] font-bold" : "bg-[#d6d6d6]"
              }`}
            >
              {tab.label}
            </button>
          ))}
        </div>
        <div className="absolute top-[5px] left-[634px] flex gap-1.5" role="toolbar">
          {hudTools.map((tool) => (
            <button key={tool.label} type="button" aria-label={tool.label} className="flex items-center">
              {tool.icon}
              {tool.caret && (
                <span className="flex w-3.5 justify-end pr-[2px]">
                  <Caret dim />
                </span>
              )}
            </button>
          ))}
        </div>
        <div className="absolute top-2 right-0 h-3.5 w-px bg-[#8b8b8b]" />
        <div className="relative flex min-h-0 flex-1">
          <PropertyPanel />
          <div className="flex h-[30px] items-center pl-1.5">
            <svg viewBox="0 0 5 9" className="h-[9px] w-[5px]" aria-hidden="true">
              <path d="M0 0v9l5-4.500z" fill="#222" />
            </svg>
            <span className="pl-3">{PartIcon}</span>
            <span className="pl-1 whitespace-pre">{"Part2  (Default<<Default>..."}</span>
          </div>
        </div>
      </main>
    </div>
  );
}
